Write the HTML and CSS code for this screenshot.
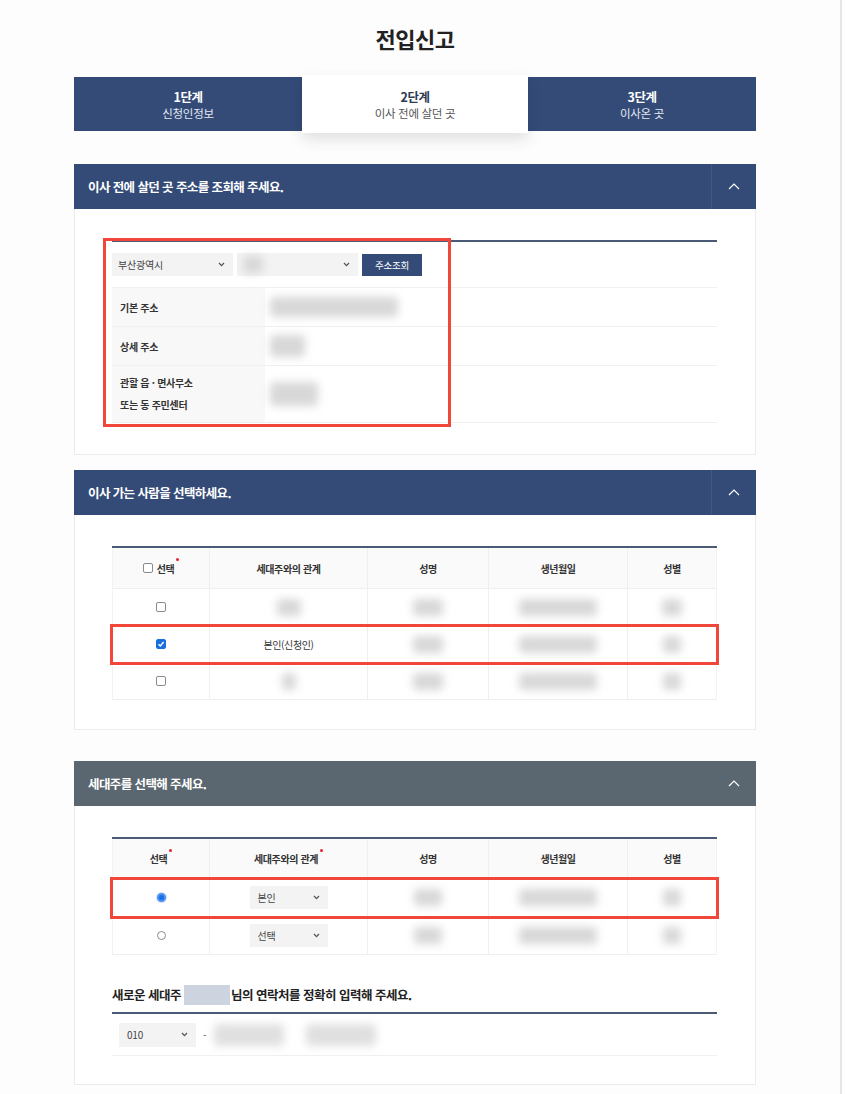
FILE: index.html
```html
<!DOCTYPE html>
<html lang="ko">
<head>
<meta charset="utf-8">
<title>전입신고</title>
<link rel="stylesheet" href="styles.css">
</head>
<body>
<div class="frame">
  <div class="wrap">
    <h1 class="title">전입신고</h1>

    <div class="steps">
      <div class="step"><span class="step-num">1단계</span><span class="step-name">신청인정보</span></div>
      <div class="step active"><span class="step-num">2단계</span><span class="step-name">이사 전에 살던 곳</span></div>
      <div class="step"><span class="step-num">3단계</span><span class="step-name">이사온 곳</span></div>
    </div>

    <!-- Section 1 -->
    <section class="card card-1">
      <div class="card-head">
        <span class="card-title">이사 전에 살던 곳 주소를 조회해 주세요.</span>
        <span class="toggle"><svg width="12" height="7" viewBox="0 0 12 7"><polyline points="1,6 6,1 11,6" fill="none" stroke="#fff" stroke-width="1.2"/></svg></span>
      </div>
      <div class="card-body">
        <div class="addr">
          <div class="addr-row search">
            <div class="select w121"><span>부산광역시</span><svg class="chev" width="7" height="5" viewBox="0 0 7 5"><polyline points="1,1 3.5,3.6 6,1" fill="none" stroke="#555" stroke-width="1.3"/></svg></div>
            <div class="select w121"><span class="blur bw20"></span><svg class="chev" width="7" height="5" viewBox="0 0 7 5"><polyline points="1,1 3.5,3.6 6,1" fill="none" stroke="#555" stroke-width="1.3"/></svg></div>
            <button class="btn">주소조회</button>
          </div>
          <div class="addr-row h39">
            <div class="addr-label">기본 주소</div>
            <div class="addr-value"><span class="blur bw128 bh20"></span></div>
          </div>
          <div class="addr-row h39">
            <div class="addr-label">상세 주소</div>
            <div class="addr-value"><span class="blur bw35 bh22"></span></div>
          </div>
          <div class="addr-row h57">
            <div class="addr-label two">관할 읍 · 면사무소<br>또는 동 주민센터</div>
            <div class="addr-value"><span class="blur bw48 bh24"></span></div>
          </div>
        </div>
        <div class="mark mark-addr"></div>
      </div>
    </section>

    <!-- Section 2 -->
    <section class="card card-2">
      <div class="card-head">
        <span class="card-title">이사 가는 사람을 선택하세요.</span>
        <span class="toggle"><svg width="12" height="7" viewBox="0 0 12 7"><polyline points="1,6 6,1 11,6" fill="none" stroke="#fff" stroke-width="1.2"/></svg></span>
      </div>
      <div class="card-body">
        <div class="ptable">
          <div class="prow phead">
            <div><span class="cbox"></span>선택<span class="req"></span></div>
            <div>세대주와의 관계</div>
            <div>성명</div>
            <div>생년월일</div>
            <div>성별</div>
          </div>
          <div class="prow">
            <div><span class="cbox"></span></div>
            <div><span class="blur bw24"></span></div>
            <div><span class="blur bw30"></span></div>
            <div><span class="blur bw78"></span></div>
            <div><span class="blur bw20"></span></div>
          </div>
          <div class="prow marked">
            <div><span class="cbox on"><svg width="8" height="8" viewBox="0 0 8 8"><polyline points="1.5,4.2 3.3,6 6.6,2" fill="none" stroke="#fff" stroke-width="1.4"/></svg></span></div>
            <div class="txt">본인(신청인)</div>
            <div><span class="blur bw30"></span></div>
            <div><span class="blur bw78"></span></div>
            <div><span class="blur bw18"></span></div>
          </div>
          <div class="prow">
            <div><span class="cbox"></span></div>
            <div><span class="blur bw14"></span></div>
            <div><span class="blur bw30"></span></div>
            <div><span class="blur bw78"></span></div>
            <div><span class="blur bw18"></span></div>
          </div>
        </div>
      </div>
    </section>

    <!-- Section 3 -->
    <section class="card card-3">
      <div class="card-head slate">
        <span class="card-title">세대주를 선택해 주세요.</span>
        <span class="toggle plain"><svg width="12" height="7" viewBox="0 0 12 7"><polyline points="1,6 6,1 11,6" fill="none" stroke="#fff" stroke-width="1.2"/></svg></span>
      </div>
      <div class="card-body">
        <div class="ptable">
          <div class="prow phead">
            <div>선택<span class="req"></span></div>
            <div>세대주와의 관계<span class="req"></span></div>
            <div>성명</div>
            <div>생년월일</div>
            <div>성별</div>
          </div>
          <div class="prow tall marked">
            <div><span class="radio on"></span></div>
            <div><div class="select w78"><span>본인</span><svg class="chev" width="7" height="5" viewBox="0 0 7 5"><polyline points="1,1 3.5,3.6 6,1" fill="none" stroke="#555" stroke-width="1.3"/></svg></div></div>
            <div><span class="blur bw28"></span></div>
            <div><span class="blur bw78"></span></div>
            <div><span class="blur bw18"></span></div>
          </div>
          <div class="prow tall">
            <div><span class="radio"></span></div>
            <div><div class="select w78"><span>선택</span><svg class="chev" width="7" height="5" viewBox="0 0 7 5"><polyline points="1,1 3.5,3.6 6,1" fill="none" stroke="#555" stroke-width="1.3"/></svg></div></div>
            <div><span class="blur bw28"></span></div>
            <div><span class="blur bw78"></span></div>
            <div><span class="blur bw18"></span></div>
          </div>
        </div>

        <h3 class="contact-title">새로운 세대주<span class="name-mask"></span>님의 연락처를 정확히 입력해 주세요.</h3>
        <div class="contact">
          <div class="contact-row">
            <div class="select w77 h24"><span>010</span><svg class="chev" width="7" height="5" viewBox="0 0 7 5"><polyline points="1,1 3.5,3.6 6,1" fill="none" stroke="#555" stroke-width="1.3"/></svg></div>
            <span class="dash">-</span>
            <span class="blur bw70 bh22 lite"></span>
            <span class="blur bw70 bh22 lite gap"></span>
          </div>
        </div>
      </div>
    </section>
  </div>
</div>
</body>
</html>
```

FILE: styles.css
```css
* { box-sizing: border-box; }

html, body {
  margin: 0;
  padding: 0;
  background: #fff;
}

body {
  font-family: "Noto Sans CJK KR", "Noto Sans", sans-serif;
  color: #333;
}

.frame {
  width: 842px;
  min-height: 1094px;
  border-right: 2px solid #e6e6e6;
  padding: 0 0 10px 74px;
  background: #fdfdfd;
}

.wrap {
  width: 682px;
}

.title {
  margin: 0;
  padding-top: 22px;
  height: 54px;
  line-height: 32px;
  text-align: center;
  font-size: 22px;
  font-weight: 700;
  color: #222;
  letter-spacing: -0.5px;
}

/* steps */
.steps {
  margin-top: 23px;
  display: grid;
  grid-template-columns: 228px 226px 228px;
  height: 54px;
}

.step {
  background: #344b78;
  color: #fff;
  display: flex;
  flex-direction: column;
  align-items: center;
  justify-content: center;
  padding-top: 1px;
}

.step-num {
  font-size: 12.5px;
  font-weight: 700;
  line-height: 16px;
  letter-spacing: -0.4px;
}

.step-name {
  font-size: 11.5px;
  line-height: 16px;
  color: #e4e9f1;
  letter-spacing: -0.3px;
}

.step.active {
  background: #fff;
  margin: -2px 0;
  box-shadow: 0 6px 14px rgba(0, 0, 0, 0.12);
  position: relative;
  z-index: 1;
}

.step.active .step-num { color: #2f3b52; }
.step.active .step-name { color: #555; }

/* cards */
.card-1 { margin-top: 33px; }
.card-2 { margin-top: 15px; }
.card-3 { margin-top: 31px; }

.card-head {
  height: 45px;
  background: #344b78;
  display: flex;
  align-items: center;
  justify-content: space-between;
}

.card-head.slate { background: #5b6770; }

.card-title {
  padding-left: 14px;
  font-size: 12.5px;
  font-weight: 700;
  color: #fff;
  letter-spacing: -0.6px;
}

.toggle {
  width: 45px;
  height: 100%;
  border-left: 1px solid rgba(255, 255, 255, 0.07);
  display: flex;
  align-items: center;
  justify-content: center;
}

.toggle.plain { border-left: 0; }

.card-body {
  background: #fff;
  border: 1px solid #ececec;
  border-top: 0;
  padding: 31px 38px 31px 37px;
  position: relative;
}

.card-2 .card-body { padding-bottom: 29px; }
.card-3 .card-body { padding-bottom: 28px; }

/* address table */
.addr {
  border-top: 2px solid #4b5a77;
}

.addr-row {
  display: flex;
  border-bottom: 1px solid #f0f0f0;
}

.addr-row.search {
  height: 46px;
  align-items: center;
  gap: 4px;
}

.h39 { height: 39px; }
.h57 { height: 57px; }

.addr-label {
  width: 153px;
  background: #f8f8f8;
  padding-left: 8px;
  font-size: 10px;
  font-weight: 700;
  color: #333;
  display: flex;
  align-items: center;
  letter-spacing: -0.3px;
}

.addr-label.two { line-height: 22px; }

.addr-value {
  flex: 1;
  display: flex;
  align-items: center;
  padding-left: 5px;
}

.select {
  height: 23px;
  background: #f3f3f3;
  display: flex;
  align-items: center;
  justify-content: space-between;
  padding: 0 8px 0 8px;
  font-size: 10px;
  color: #444;
  letter-spacing: -0.2px;
}

.select .chev { flex: none; }

.w121 { width: 121px; padding-left: 6px; }
.w78 { width: 78px; }
.w77 { width: 77px; }
.h24 { height: 24px; }

.btn {
  height: 22px;
  width: 60px;
  border: 0;
  background: #344b78;
  color: #fff;
  font-family: inherit;
  font-size: 9.5px;
  padding: 0;
  letter-spacing: -0.3px;
}

.mark {
  position: absolute;
  border: 3px solid #f0473a;
  pointer-events: none;
}

.mark-addr {
  left: 28px;
  top: 29px;
  width: 348px;
  height: 189px;
}

/* blurred placeholders */
.blur {
  display: inline-block;
  height: 17px;
  background: #d8d8d8;
  border-radius: 4px;
  filter: blur(4px);
}

.blur.lite { background: #e0e0e0; }

.bw14 { width: 14px; }
.bw18 { width: 18px; }
.bw20 { width: 20px; }
.bw24 { width: 24px; }
.bw28 { width: 28px; }
.bw30 { width: 30px; }
.bw35 { width: 35px; }
.bw48 { width: 48px; }
.bw70 { width: 70px; }
.bw78 { width: 78px; }
.bw128 { width: 128px; }
.bh20 { height: 20px; }
.bh22 { height: 22px; }
.bh24 { height: 24px; }

/* person tables */
.ptable {
  border-top: 2px solid #4b5a77;
}

.prow {
  display: grid;
  grid-template-columns: 98px 158px 121px 139px 89px;
  height: 37px;
}

.prow.phead {
  height: 41px;
  background: #fafafa;
}

.card-3 .prow.phead { height: 40px; }

.prow.tall { height: 38px; }

.prow > div {
  display: flex;
  align-items: center;
  justify-content: center;
  border-right: 1px solid #efefef;
  border-bottom: 1px solid #efefef;
  font-size: 10px;
  color: #333;
  letter-spacing: -0.4px;
}

.prow > div:first-child { border-left: 1px solid #f2f2f2; }
.prow > div:last-child { border-right: 1px solid #f2f2f2; }

.phead > div {
  font-weight: 700;
  color: #333;
}

.prow .txt { color: #333; }

.prow.marked {
  outline: 3px solid #f0473a;
  outline-offset: -1px;
  position: relative;
  z-index: 1;
}

.req {
  display: inline-block;
  width: 3px;
  height: 3px;
  border-radius: 50%;
  background: #e3202a;
  align-self: flex-start;
  margin-top: 10px;
  margin-left: 2px;
}

.cbox {
  display: inline-flex;
  align-items: center;
  justify-content: center;
  width: 10px;
  height: 10px;
  border: 1px solid #8a8a8a;
  border-radius: 2px;
  background: #fff;
}

.phead .cbox { margin-right: 4px; }

.cbox.on {
  background: #1a6fe0;
  border-color: #1a6fe0;
}

.radio {
  display: inline-block;
  width: 9px;
  height: 9px;
  border-radius: 50%;
  border: 1px solid #8a8a8a;
  background: #fff;
}

.radio.on {
  border: 2px solid #4a90f0;
  background: #1a6fe0;
  box-shadow: 0 0 0 1px #cfe0fb;
}

/* contact */
.contact-title {
  margin: 30px 0 0;
  line-height: 20px;
  font-size: 12.5px;
  font-weight: 700;
  color: #222;
  letter-spacing: -0.5px;
  display: flex;
  align-items: center;
  padding-bottom: 7px;
}

.name-mask {
  display: inline-block;
  width: 46px;
  height: 20px;
  background: #cdd3df;
  margin: 0 1px 0 3px;
  filter: blur(0.6px);
}

.contact {
  border-top: 2px solid #4b5a77;
}

.contact-row {
  height: 42px;
  display: flex;
  align-items: center;
  padding-left: 7px;
  border-bottom: 1px solid #f0f0f0;
}

.dash {
  font-size: 10px;
  color: #555;
  margin: 0 8px 0 7px;
}

.blur.gap { margin-left: 22px; }
```
